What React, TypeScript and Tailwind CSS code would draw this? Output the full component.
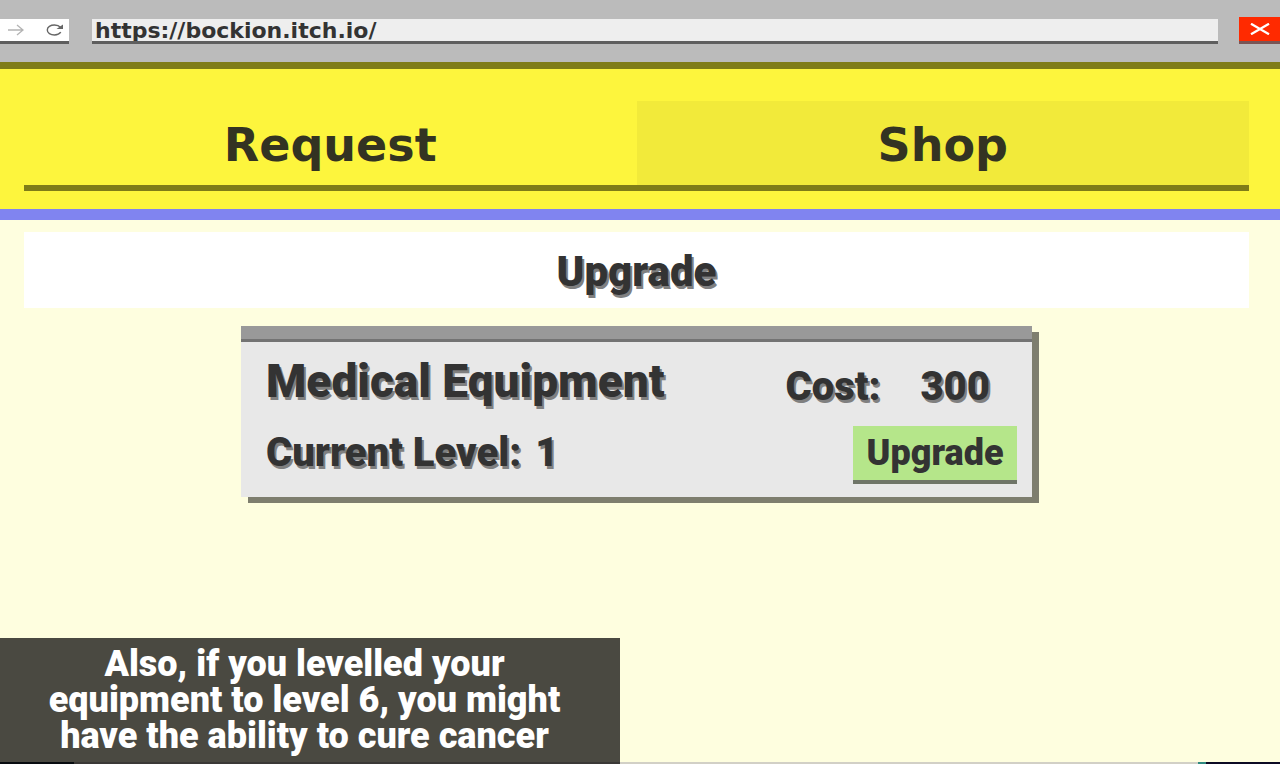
import { useState } from "react";

const displayFont = "font-['DejaVu_Sans',sans-serif] font-bold";
const blockFont = "font-['Roboto',sans-serif] font-black text-[#333333]";
const textShadow = "[text-shadow:2px_3px_0_#808080]";

interface Upgrade {
  name: string;
  level: number;
  cost: number;
}

const upgrades: Upgrade[] = [{ name: "Medical Equipment", level: 1, cost: 300 }];

function BrowserBar() {
  const [url, setUrl] = useState("https://bockion.itch.io/");

  return (
    <header className="flex items-end bg-[#bbbbbb] pb-[18px] pt-[17px]">
      <div className="flex h-[25px] w-[69px] shrink-0 items-center justify-between border-b-[3px] border-[#5e5e5e] bg-white pl-2 pr-[5px]">
        <button type="button" aria-label="Forward">
          <svg width="16" height="12" viewBox="0 0 16 12" fill="none" stroke="#b4b4b4" strokeWidth="1.3">
            <path d="M0 6H14.5M9 1L15 6L9 11" />
          </svg>
        </button>
        <button type="button" aria-label="Reload">
          <svg width="18" height="12" viewBox="0 0 18 12" fill="none" stroke="#666666" strokeWidth="1.4">
            <path d="M14.8 8.2C13.6 10 11.3 11 8.5 11C4.5 11 1.3 9 1.3 6C1.3 3 4.5 1 8.5 1C11.3 1 13.3 2 14.8 3.6" />
            <path d="M17 0.5V5H10.5Z" fill="#666666" stroke="none" />
          </svg>
        </button>
      </div>
      <input
        type="text"
        aria-label="Address"
        value={url}
        onChange={(event) => setUrl(event.target.value)}
        className={`ml-[23px] mr-[21px] h-[25px] min-w-0 flex-1 border-b-[3px] border-[#5e5e5e] bg-[#eeeeee] px-[3px] text-[22px] leading-[22px] text-[#333333] outline-none ${displayFont}`}
      />
      <button
        type="button"
        aria-label="Close"
        className="flex h-[27px] w-[41px] shrink-0 items-center justify-center border-b-[3px] border-[#7a5555] bg-[#ff2a00]"
      >
        <svg width="20" height="12" viewBox="0 0 20 12" fill="none" stroke="#ffffff" strokeWidth="2.2">
          <path d="M1 0.7L19 11.3M19 0.7L1 11.3" />
        </svg>
      </button>
    </header>
  );
}

function Tabs() {
  return (
    <nav className="border-b-[11px] border-t-[7px] border-b-[#8084f0] border-t-[#7f7c18] bg-[#fdf53d] pb-[18px] pl-6 pr-[31px] pt-8">
      <div className="flex border-b-[6px] border-[#7f7c18]">
        <button type="button" className={`h-[84px] flex-1 pt-1 text-[46px] leading-[56px] text-[#333322] ${displayFont}`}>
          Request
        </button>
        <button
          type="button"
          className={`h-[84px] flex-1 bg-[#f2ea3a] pt-1 text-[46px] leading-[56px] text-[#333322] ${displayFont}`}
        >
          Shop
        </button>
      </div>
    </nav>
  );
}

function UpgradeCard({ name, level, cost }: Upgrade) {
  return (
    <article className="w-full max-w-[791px] bg-[#e8e8e8] shadow-[7px_6px_0_#7e7e6e]">
      <div className="h-4 border-b-[3px] border-[#737373] bg-[#999999]" />
      <div className="flex justify-between pb-[13px] pl-[25px] pr-[15px]">
        <div className={`flex flex-col gap-6 pt-[15px] ${blockFont} ${textShadow}`}>
          <h2 className="text-[46px] leading-[48px]">{name}</h2>
          <p className="text-[40px] leading-[48px]">
            Current Level: <span className="ml-1">{level}</span>
          </p>
        </div>
        <div className={`flex flex-col items-end gap-[15px] pt-[21px] ${blockFont}`}>
          <p className={`flex gap-10 pr-[27px] text-[40px] leading-[48px] ${textShadow}`}>
            <span>Cost:</span>
            <span>{cost}</span>
          </p>
          <button
            type="button"
            className="h-[58px] w-[164px] border-b-4 border-[#6f7568] bg-[#b5e68a] text-[36px] leading-[48px]"
          >
            Upgrade
          </button>
        </div>
      </div>
    </article>
  );
}

export default function App() {
  return (
    <div className="relative flex min-h-screen flex-col bg-[#fefedf]">
      <BrowserBar />
      <Tabs />
      <main className="flex flex-1 flex-col items-center gap-[18px] pb-40 pl-6 pr-[31px] pt-3">
        <h1 className={`w-full bg-white pb-3 pt-4 text-center text-[42px] leading-[48px] ${blockFont} ${textShadow}`}>
          Upgrade
        </h1>
        {upgrades.map((upgrade) => (
          <UpgradeCard key={upgrade.name} {...upgrade} />
        ))}
      </main>
      <div className="absolute bottom-0 left-0 w-[620px] bg-[#4a4941] pb-[10px] pr-[11px] pt-2 text-center font-['Roboto',sans-serif] text-[36px] leading-[36px] font-black text-white">
        <p>
          Also, if you levelled your
          <br />
          equipment to level 6, you might
          <br />
          have the ability to cure cancer
        </p>
      </div>
      <div className="absolute bottom-0 left-0 flex h-[2px] w-full">
        <div className="w-[74px] bg-[#080c10]" />
        <div className="w-[546px] bg-[#3a3836]" />
        <div className="flex-1 bg-[#d2d0c6]" />
        <div className="w-2 bg-[#2f8a80]" />
        <div className="w-[74px] bg-[#0c0a24]" />
      </div>
    </div>
  );
}
